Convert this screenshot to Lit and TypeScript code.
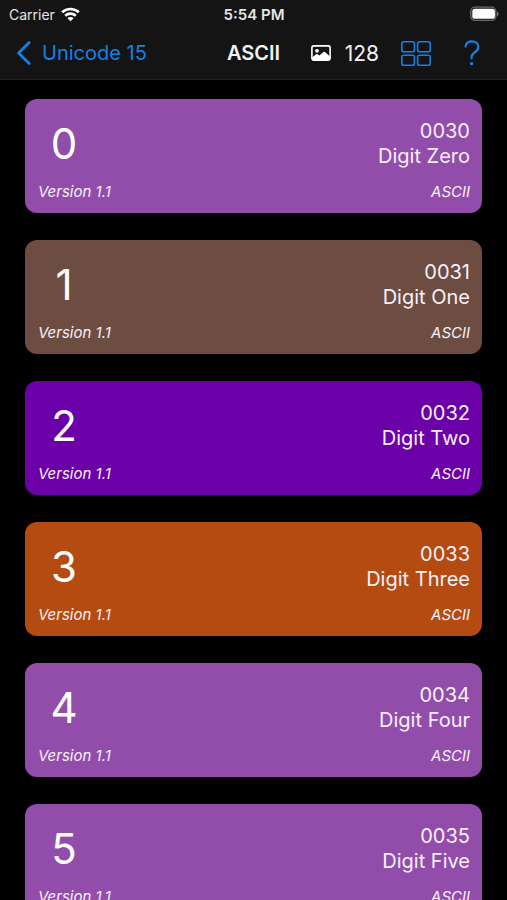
import { LitElement, html, css } from "lit";
import { customElement, property } from "lit/decorators.js";

interface Character {
  glyph: string;
  code: string;
  name: string;
  color: string;
}

const CHARACTERS: Character[] = [
  { glyph: "0", code: "0030", name: "Digit Zero", color: "#924dab" },
  { glyph: "1", code: "0031", name: "Digit One", color: "#6d4c41" },
  { glyph: "2", code: "0032", name: "Digit Two", color: "#6c00a8" },
  { glyph: "3", code: "0033", name: "Digit Three", color: "#b44b11" },
  { glyph: "4", code: "0034", name: "Digit Four", color: "#924dab" },
  { glyph: "5", code: "0035", name: "Digit Five", color: "#924dab" },
];

@customElement("status-bar")
export class StatusBar extends LitElement {
  static styles = css`
    :host {
      display: grid;
      grid-template-columns: 1fr auto 1fr;
      align-items: center;
      height: 28px;
      padding: 0 8px 0 9px;
      font-size: 14px;
      color: #e6e6e6;
    }
    .carrier {
      display: flex;
      align-items: center;
      gap: 6px;
    }
    .time {
      font-size: 15px;
      font-weight: 600;
    }
    .battery {
      justify-self: end;
    }
    svg {
      display: block;
    }
  `;

  render() {
    return html`
      <div class="carrier">
        <span>Carrier</span>
        <svg width="19" height="15" viewBox="0 0 19 15" fill="none" stroke="#fff" stroke-width="2.6">
          <path d="M1.2 5.3a12 12 0 0 1 16.6 0" />
          <path d="M4.2 8.7a7.7 7.7 0 0 1 10.6 0" />
          <path d="M9.5 14.2 6.4 11.2a4.4 4.4 0 0 1 6.2 0Z" fill="#fff" stroke="none" />
        </svg>
      </div>
      <div class="time">5:54 PM</div>
      <svg class="battery" width="29" height="16" viewBox="0 0 29 16">
        <rect x=".8" y="1.2" width="25" height="13.2" rx="4" fill="none" stroke="#6a6a6a" stroke-width="1.3" />
        <rect x="2.3" y="2.8" width="22.6" height="10" rx="2.6" fill="#fff" />
        <path d="M27 5.4c2 .8 2 4 0 4.8Z" fill="#777" />
      </svg>
    `;
  }
}

@customElement("nav-bar")
export class NavBar extends LitElement {
  static styles = css`
    :host {
      display: grid;
      grid-template-columns: 1fr auto 1fr;
      align-items: center;
      height: 50px;
      padding: 0 16px 1px;
      font-size: 20px;
      color: #f2f2f2;
    }
    .back {
      display: flex;
      align-items: center;
      gap: 10px;
      color: #1780e6;
      text-decoration: none;
    }
    h1 {
      margin: 0;
      font-size: 20px;
      font-weight: 600;
    }
    .tools {
      display: flex;
      align-items: center;
      justify-content: flex-end;
      padding-right: 11px;
    }
    .count {
      margin: 0 22px 0 14px;
      font-size: 21px;
    }
    button {
      padding: 0;
      border: 0;
      background: none;
      color: #1780e6;
    }
    .help {
      margin-left: 33px;
    }
    svg {
      display: block;
    }
  `;

  render() {
    return html`
      <a class="back" href="#unicode-15">
        <svg width="16" height="26" viewBox="0 0 16 26" fill="none" stroke="currentColor" stroke-width="2.8" stroke-linecap="round" stroke-linejoin="round">
          <path d="M13.2 2.5 2.6 13l10.6 10.5" />
        </svg>
        <span>Unicode 15</span>
      </a>
      <h1>ASCII</h1>
      <div class="tools">
        <svg width="20" height="16" viewBox="0 0 20 16">
          <rect x=".9" y=".9" width="18.2" height="14.2" rx="2" fill="none" stroke="#fff" stroke-width="1.6" />
          <circle cx="6" cy="5.8" r="1.9" fill="#fff" />
          <path d="M1 12.6 5.2 9.2Q6 8.6 6.8 9.2L8.4 10.6 12.4 7Q13.2 6.3 14 7L19 11.4V14a1.2 1.2 0 0 1-1.2 1.2H2.2A1.2 1.2 0 0 1 1 14Z" fill="#fff" />
        </svg>
        <span class="count">128</span>
        <button aria-label="Grid view">
          <svg width="30" height="25" viewBox="0 0 30 25" fill="none" stroke="currentColor" stroke-width="1.6">
            <rect x=".8" y=".8" width="12.6" height="10" rx="1.8" />
            <rect x="16.6" y=".8" width="12.6" height="10" rx="1.8" />
            <rect x=".8" y="14.2" width="12.6" height="10" rx="1.8" />
            <rect x="16.6" y="14.2" width="12.6" height="10" rx="1.8" />
          </svg>
        </button>
        <button class="help" aria-label="Help">
          <svg width="16" height="26" viewBox="0 0 16 26" fill="none" stroke="currentColor" stroke-width="2.2" stroke-linecap="round">
            <path d="M1.6 6.4C2 3.2 4.4 1.4 7.9 1.4c3.8 0 6.5 2.2 6.5 5.4 0 2.6-1.3 4.2-3.7 5.7-2.4 1.5-3.1 2.6-3.1 4.6v1.2" />
            <circle cx="7.6" cy="23.6" r="1.7" fill="currentColor" stroke="none" />
          </svg>
        </button>
      </div>
    `;
  }
}

@customElement("character-card")
export class CharacterCard extends LitElement {
  @property({ attribute: false }) character!: Character;

  static styles = css`
    .card {
      display: grid;
      grid-template-columns: auto 1fr;
      grid-template-rows: 1fr auto;
      box-sizing: border-box;
      min-height: 114px;
      padding: 20px 12px 12px 13px;
      border-radius: 12px;
      color: #f8f0fa;
    }
    .glyph {
      width: 52px;
      text-align: center;
      font-size: 42px;
      line-height: 50px;
      color: #fff;
    }
    .title {
      text-align: right;
      font-size: 20px;
      line-height: 25px;
    }
    .note {
      font-size: 15px;
      line-height: 18px;
      font-style: italic;
    }
    .block {
      text-align: right;
    }
  `;

  render() {
    const c = this.character;
    return html`
      <article class="card" style="background:${c.color}">
        <div class="glyph">${c.glyph}</div>
        <div class="title">
          <div>${c.code}</div>
          <div>${c.name}</div>
        </div>
        <div class="note">Version 1.1</div>
        <div class="note block">ASCII</div>
      </article>
    `;
  }
}

@customElement("app-root")
export class AppRoot extends LitElement {
  static styles = css`
    :host {
      display: flex;
      flex-direction: column;
      height: 100vh;
      background: #000;
      font-family: Inter, "Liberation Sans", sans-serif;
    }
    header {
      flex: none;
      background: #141414;
      border-bottom: 1px solid #202020;
    }
    main {
      flex: 1;
      min-height: 0;
      overflow-y: auto;
      scrollbar-width: none;
      display: flex;
      flex-direction: column;
      gap: 27px;
      padding: 19px 25px;
    }
    character-card {
      display: block;
      flex: none;
    }
  `;

  render() {
    return html`
      <header>
        <status-bar></status-bar>
        <nav-bar></nav-bar>
      </header>
      <main>
        ${CHARACTERS.map((c) => html`<character-card .character=${c}></character-card>`)}
      </main>
    `;
  }
}
